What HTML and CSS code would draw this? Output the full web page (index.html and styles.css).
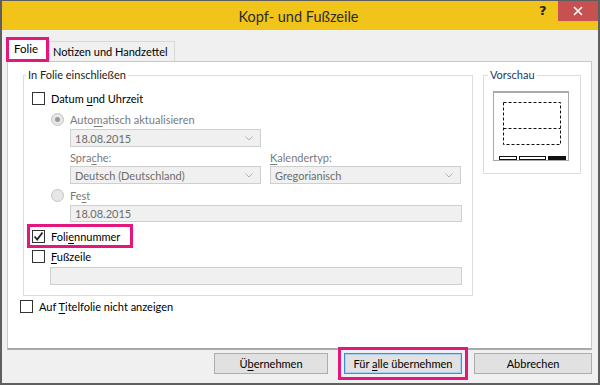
FILE: index.html
```html
<!DOCTYPE html>
<html>
<head>
  <title>Kopf- und Fußzeile</title>
  <link rel="stylesheet" href="styles.css">
</head>
<body>

<div class="dialog">
  <div class="titlebar">
    <span class="title">Kopf- und Fußzeile</span>
    <span class="help">?</span>
    <span class="close">
      <svg width="10" height="10" viewBox="0 0 10 10"><path d="M1 1 L9 9 M9 1 L1 9" stroke="#fff" stroke-width="1.6"/></svg>
    </span>
  </div>

  <div class="content">
    <!-- Tabs -->
    <div class="tabs">
      <div class="tab active">Folie</div>
      <div class="tab">Notizen und Handzettel</div>
    </div>

    <div class="panel">
      <div class="groups">
        <fieldset class="group main">
          <legend>In Folie einschließen</legend>

          <div class="opt row-datum">
            <span class="cb"></span>
            <span>Datum <u>u</u>nd Uhrzeit</span>
          </div>

          <div class="opt sub disabled">
            <span class="radio checked"></span>
            <span>Auto<u>m</u>atisch aktualisieren</span>
          </div>
          <div class="combo short">
            <span>18.08.2015</span>
            <svg class="chev" width="8" height="5" viewBox="0 0 8 5"><path d="M0.5 0.5 L4 4 L7.5 0.5" fill="none" stroke="#b3b3b3"/></svg>
          </div>

          <div class="pair-labels disabled">
            <span>Spra<u>c</u>he:</span>
            <span><u>K</u>alendertyp:</span>
          </div>
          <div class="pair">
            <div class="combo">
              <span>Deutsch (Deutschland)</span>
              <svg class="chev" width="8" height="5" viewBox="0 0 8 5"><path d="M0.5 0.5 L4 4 L7.5 0.5" fill="none" stroke="#b3b3b3"/></svg>
            </div>
            <div class="combo">
              <span>Gregorianisch</span>
              <svg class="chev" width="8" height="5" viewBox="0 0 8 5"><path d="M0.5 0.5 L4 4 L7.5 0.5" fill="none" stroke="#b3b3b3"/></svg>
            </div>
          </div>

          <div class="opt sub disabled">
            <span class="radio"></span>
            <span>Fe<u>s</u>t</span>
          </div>
          <div class="field fixed">18.08.2015</div>

          <div class="opt row-number">
            <span class="cb">
              <svg width="11" height="11" viewBox="0 0 11 11"><path d="M1.5 5.5 L4.2 8.5 L9.5 1.5" fill="none" stroke="#222" stroke-width="1.8"/></svg>
            </span>
            <span>Foli<u>e</u>nnummer</span>
          </div>

          <div class="opt">
            <span class="cb"></span>
            <span><u>F</u>ußzeile</span>
          </div>
          <div class="field footer"></div>
        </fieldset>

        <fieldset class="group preview">
          <legend>Vorschau</legend>
          <svg width="76" height="70" viewBox="0 0 76 70">
            <rect x="0.5" y="0.5" width="75" height="69" fill="#fff" stroke="#a8a8a8"/>
            <line x1="0" y1="1" x2="76" y2="1" stroke="#a8a8a8" stroke-width="2"/>
            <rect x="10.5" y="11.5" width="57" height="42" fill="none" stroke="#111" stroke-dasharray="3 2"/>
            <line x1="10.5" y1="37.5" x2="67.5" y2="37.5" stroke="#111" stroke-dasharray="3 2"/>
            <rect x="6.5" y="65.5" width="17" height="3" fill="none" stroke="#111"/>
            <rect x="26.5" y="65.5" width="26" height="3" fill="none" stroke="#111"/>
            <rect x="55" y="65" width="18" height="4" fill="#111"/>
          </svg>
        </fieldset>
      </div>

      <div class="opt title-opt">
        <span class="cb"></span>
        <span>Auf <u>T</u>itelfolie nicht anzeigen</span>
      </div>
    </div>

    <div class="buttons">
      <button class="btn apply">Ü<u>b</u>ernehmen</button>
      <button class="btn apply-all">Für <u>a</u>lle übernehmen</button>
      <button class="btn cancel">Abbrechen</button>
    </div>
  </div>
</div>

</body>
</html>
```

FILE: styles.css
```css
body {
  margin: 0;
  font-family: Lato, "Noto Sans", sans-serif;
  font-size: 11px;
  color: #000;
  background: #5f5f5f;
}

u {
  text-decoration-thickness: 1px;
  text-underline-offset: 2px;
}

.dialog {
  width: 600px;
  height: 385px;
  box-sizing: border-box;
  border: 2px solid #5f5f5f;
  border-top-width: 1px;
  background: #f0f0f0;
  display: flex;
  flex-direction: column;
}

/* title bar */
.titlebar {
  height: 29px;
  flex-shrink: 0;
  background: #f0c419;
  display: flex;
  align-items: flex-start;
}

.titlebar .title {
  flex: 1;
  text-align: center;
  padding-left: 56px;
  padding-top: 6px;
  font-size: 14.5px;
  color: #2b2b2b;
  line-height: 20px;
}

.titlebar .help {
  width: 19px;
  padding-top: 1px;
  font-family: "DejaVu Sans", sans-serif;
  font-weight: bold;
  font-size: 13px;
  color: #222;
  line-height: 18px;
}

.titlebar .close {
  width: 40px;
  height: 20px;
  background: #c75050;
  display: flex;
  align-items: center;
  justify-content: center;
}

/* body of the dialog */
.content {
  flex: 1;
  padding: 7px 6px 0 5px;
}

.tabs {
  display: flex;
  align-items: flex-end;
  height: 24px;
  position: relative;
  z-index: 1;
}

.tab {
  height: 20px;
  box-sizing: border-box;
  padding: 0 6px 0 3px;
  border: 1px solid #d9d9d9;
  border-bottom: none;
  background: #f0f0f0;
  line-height: 19px;
}

.tab.active {
  width: 43px;
  height: 25px;
  margin-left: -1px;
  margin-bottom: -1px;
  padding: 0 0 0 5px;
  border: 3px solid #e3177d;
  background: #fff;
  line-height: 17px;
  font-size: 11.5px;
}

.panel {
  height: 289px;
  box-sizing: border-box;
  background: #fff;
  border: 1px solid #c9c9c9;
  border-bottom: 2px solid #a9a9a9;
  padding: 5px 10px 0 15px;
}

.groups {
  display: flex;
  gap: 10px;
}

.group {
  margin: 0;
  border: 1px solid #dcdcdc;
  min-width: 0;
}

.group legend {
  padding: 0 2px;
  line-height: 16px;
  color: #1a1a1a;
}

.group.main {
  width: 450px;
  box-sizing: border-box;
  padding: 5px 10px 10px 8px;
}

.group.main legend {
  margin-left: -6px;
}

.group.preview {
  width: 98px;
  height: 107px;
  box-sizing: border-box;
  padding: 8px 0 0 9px;
}

.group.preview legend {
  margin-left: -5px;
  color: #1c3764;
}

.group.preview svg {
  display: block;
}

/* checkbox / radio rows */
.opt {
  display: flex;
  align-items: center;
  gap: 6px;
  height: 20px;
}

.opt.sub {
  padding-left: 19px;
  margin-top: 1px;
}

.disabled {
  color: #7a7a7a;
}

.cb {
  width: 13px;
  height: 13px;
  box-sizing: border-box;
  border: 1px solid #333;
  background: #fff;
  display: flex;
  align-items: center;
  justify-content: center;
  flex-shrink: 0;
}

.radio {
  width: 13px;
  height: 13px;
  box-sizing: border-box;
  border-radius: 50%;
  border: 1px solid #c4c4c4;
  background: #e6e6e6;
  display: flex;
  align-items: center;
  justify-content: center;
  flex-shrink: 0;
}

.radio.checked::after {
  content: "";
  width: 5px;
  height: 5px;
  border-radius: 50%;
  background: #9a9a9a;
}

/* disabled combo boxes and fields */
.combo {
  width: 191px;
  height: 18px;
  box-sizing: border-box;
  border: 1px solid #cfcfcf;
  background: #f0f0f0;
  color: #6d6d6d;
  display: flex;
  align-items: center;
  justify-content: space-between;
  padding: 0 7px 0 4px;
}

.combo.short {
  margin-left: 38px;
}

.pair-labels {
  display: flex;
  gap: 9px;
  height: 18px;
  margin-top: 1px;
  align-items: center;
  padding-left: 38px;
}

.pair-labels span {
  width: 191px;
}

.pair {
  display: flex;
  gap: 9px;
  padding-left: 38px;
}

.field {
  height: 17px;
  box-sizing: border-box;
  border: 1px solid #cfcfcf;
  background: #f0f0f0;
  color: #6d6d6d;
  padding-left: 4px;
  line-height: 15px;
}

.field.fixed {
  margin-left: 38px;
}

.field.footer {
  height: 18px;
  margin-left: 18px;
  margin-top: 1px;
}

.row-number {
  margin-top: 4px;
  width: max-content;
  padding: 2px 11px 1px 3px;
  margin-left: -3px;
  outline: 3px solid #e3177d;
  outline-offset: -1px;
  height: 17px;
}

.title-opt {
  margin-left: -3px;
  margin-top: 0;
}

/* bottom buttons */
.buttons {
  display: flex;
  justify-content: flex-end;
  padding-top: 3px;
}

.btn {
  height: 21px;
  box-sizing: border-box;
  font: inherit;
  color: #000;
  background: #e1e1e1;
  border: 1px solid #adadad;
  padding: 0;
  white-space: nowrap;
}

.btn.apply {
  width: 114px;
}

.btn.apply-all {
  width: 118px;
  margin-left: 16px;
  border-color: #3c8fdc;
  box-shadow: inset 0 0 0 1px #a9d0f5;
  outline: 3px solid #e3177d;
  outline-offset: 3px;
}

.btn.cancel {
  width: 118px;
  margin-left: 12px;
}
```
